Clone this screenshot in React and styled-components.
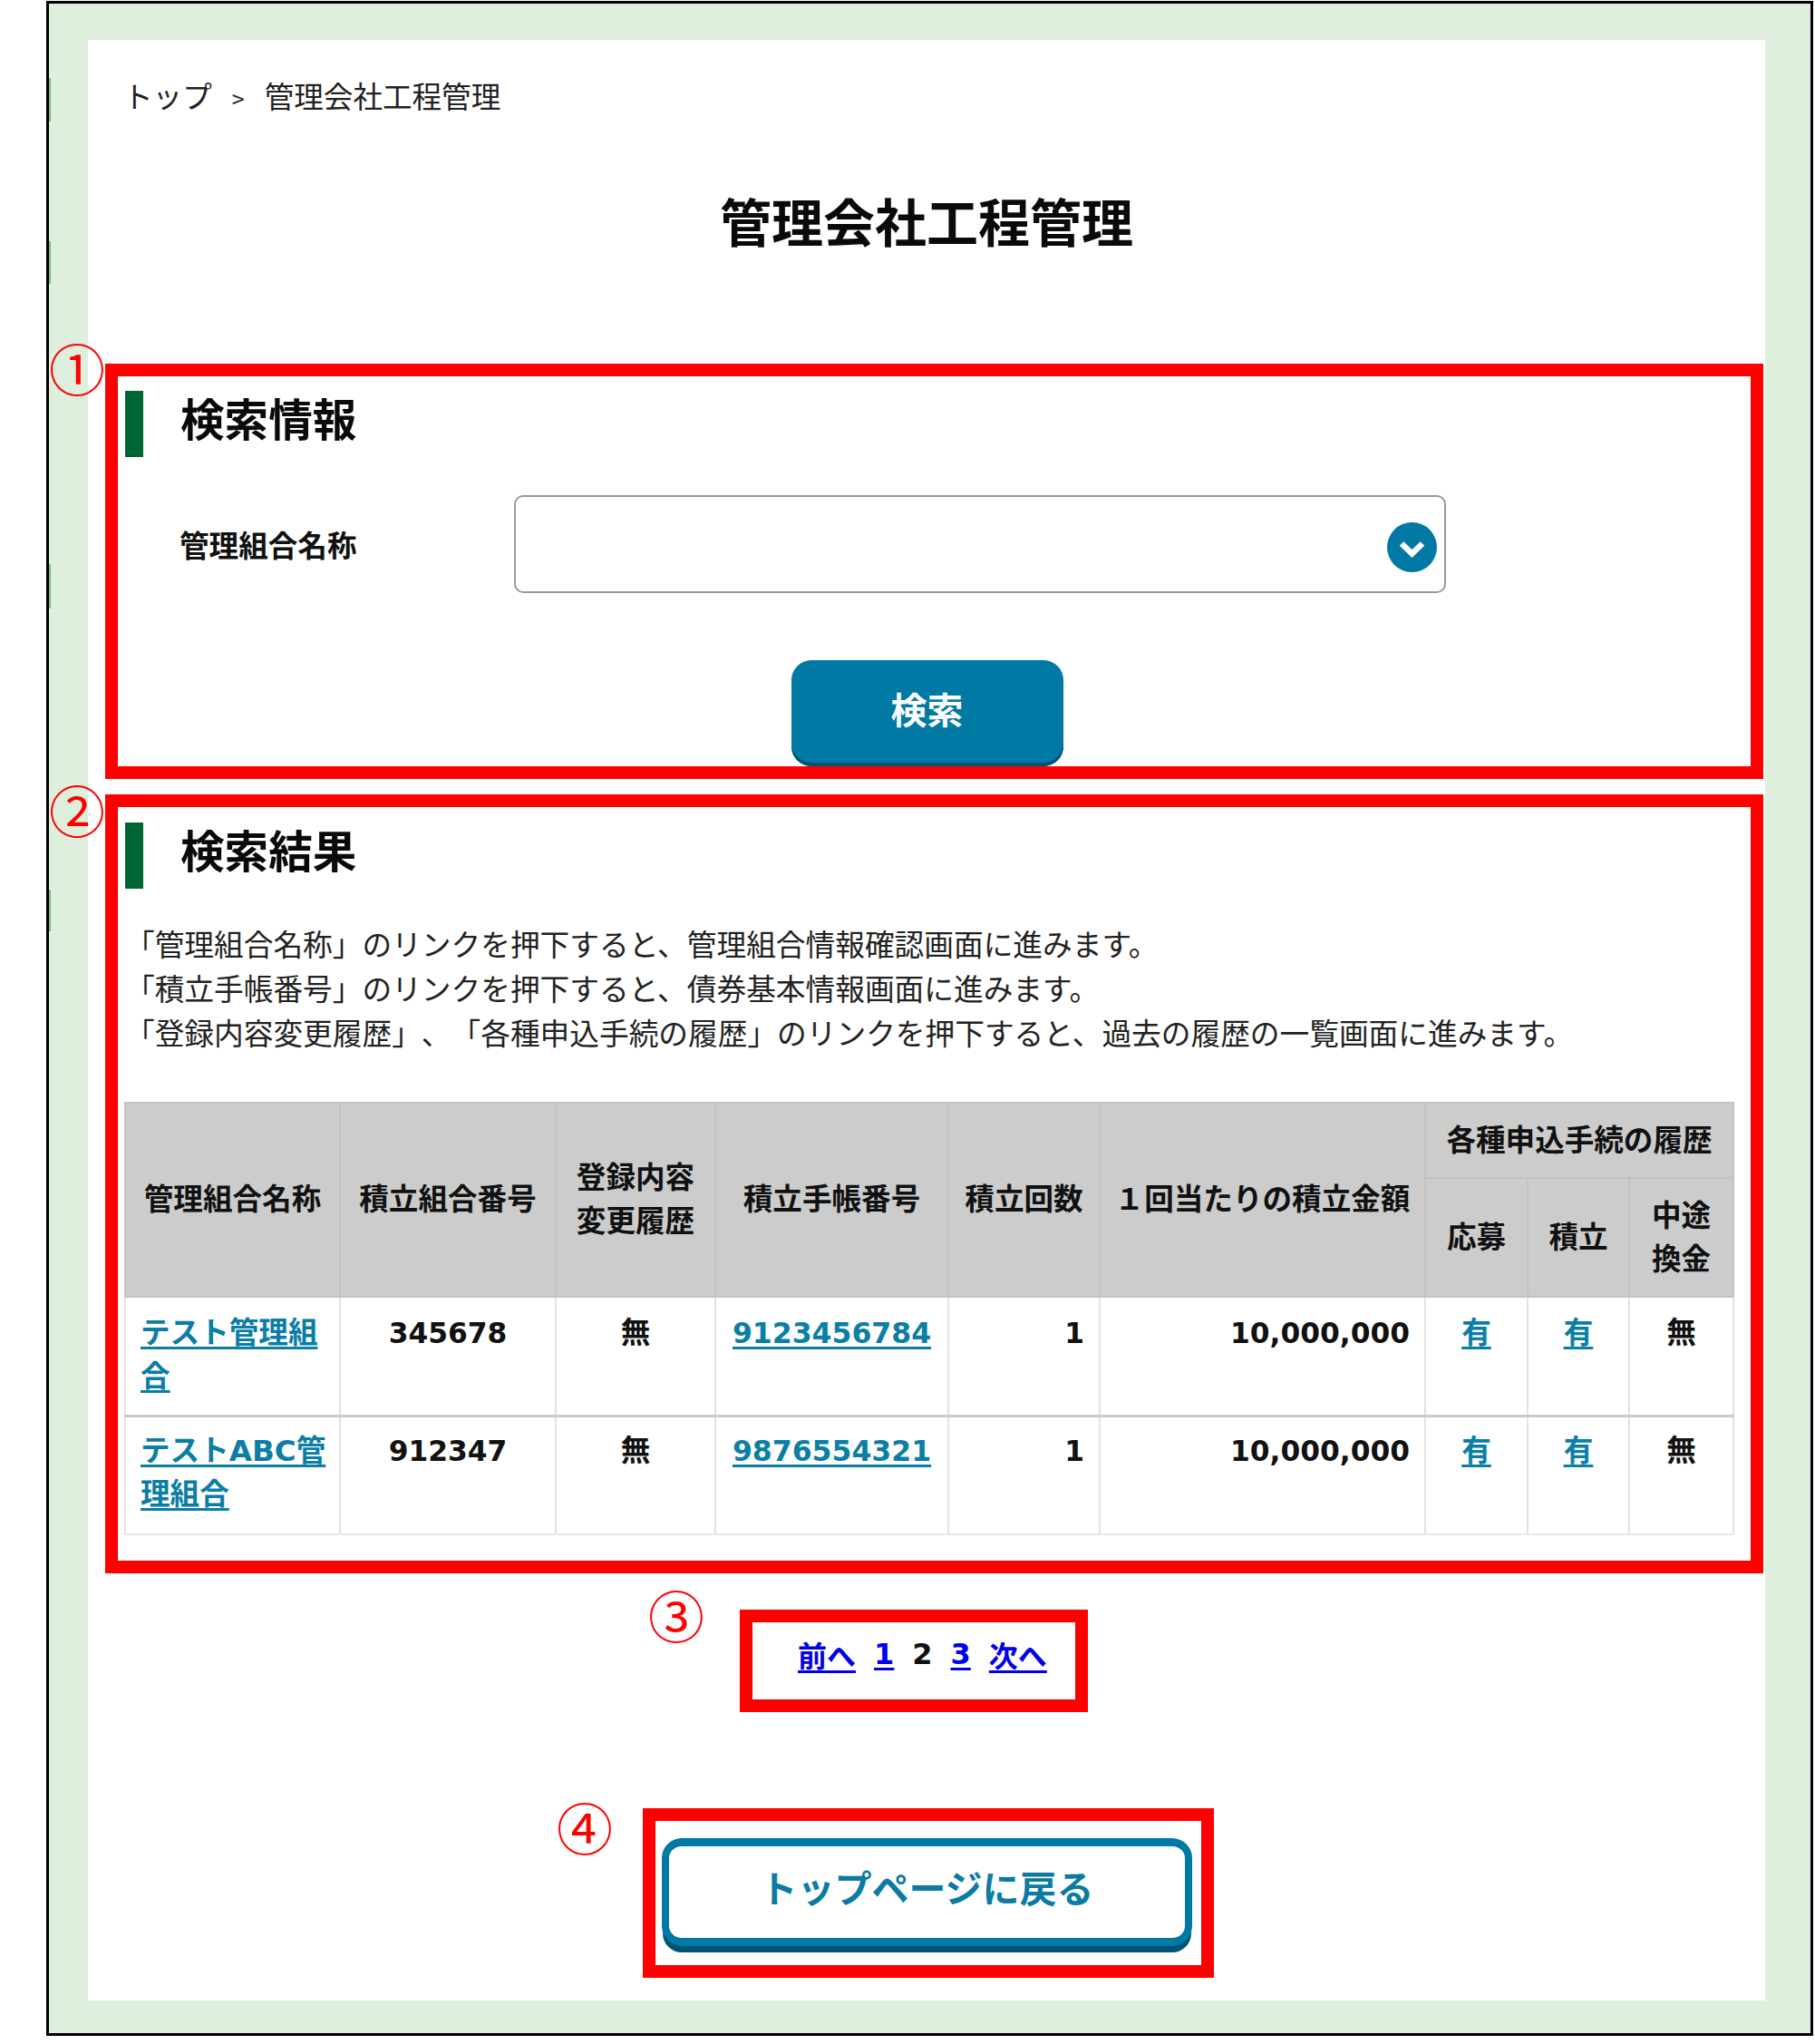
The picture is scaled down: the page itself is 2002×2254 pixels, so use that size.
import React from 'react';
import styled, { createGlobalStyle } from 'styled-components';

const GlobalStyle = createGlobalStyle`
	html, body {
		margin: 0;
		padding: 0;
		background: #fff;
	}
	body {
		font-family: "Noto Sans CJK JP", sans-serif;
		color: #1a1a1a;
	}
	* {
		box-sizing: border-box;
	}
`;

const Frame = styled.div`
	position: relative;
	width: 1949px;
	height: 2244px;
	margin: 1px 0 0 51px;
	padding: 40px 50px 0 43px;
	border: 3px solid #000;
	background: #dfefdd;
`;

const EdgeMark = styled.i`
	position: absolute;
	left: 0;
	top: ${(p) => p.$top}px;
	width: 2px;
	height: ${(p) => p.$height}px;
	background: #7fb98d;
`;

const Panel = styled.main`
	display: flex;
	flex-direction: column;
	height: 2162px;
	padding: 37px 2px 0 19px;
	background: #fff;
`;

const Crumbs = styled.nav`
	display: flex;
	align-items: center;
	height: 48px;
	padding-left: 20px;
	font-size: 32.6px;
	line-height: 48px;
	color: #222;
	span {
		margin: 6px 22px 0 22px;
		font-size: 25px;
	}
`;

const PageTitle = styled.h1`
	margin: 73px 0 119px;
	font-size: 57px;
	line-height: 80px;
	font-weight: 700;
	text-align: center;
	color: #0a0a0a;
	padding-right: 17px;
`;

const RedBox = styled.section`
	position: relative;
	display: flex;
	flex-direction: column;
	border: 14px solid #f00;
	padding: ${(p) => p.$padding};
	margin: ${(p) => p.$margin};
	width: ${(p) => p.$width};
	height: ${(p) => p.$height};
`;

const Circled = styled.span`
	position: absolute;
	left: ${(p) => p.$left}px;
	top: ${(p) => p.$top}px;
	width: 56px;
	font-size: 62px;
	line-height: 56px;
	text-align: center;
	color: #f00;
`;

const SectionTitle = styled.h2`
	margin: 0;
	height: 73px;
	padding-left: 41px;
	border-left: 20px solid #006633;
	font-size: 48.6px;
	line-height: 58px;
	font-weight: 700;
	color: #0a0a0a;
`;

const Field = styled.div`
	display: flex;
	align-items: center;
	margin-top: 42px;
	padding-left: 60px;
`;

const FieldLabel = styled.label`
	width: 369px;
	font-size: 32.6px;
	line-height: 48px;
	font-weight: 700;
	color: #111;
`;

const SelectBox = styled.div`
	display: flex;
	align-items: center;
	justify-content: flex-end;
	width: 1028px;
	height: 108px;
	padding: 6px 8px 0 0;
	border: 2px solid #9a9a9a;
	border-radius: 10px;
	background: #fff;
`;

const SearchButton = styled.button`
	align-self: center;
	width: 300px;
	height: 117px;
	margin: 74px 24px 0 0;
	padding: 0 0 12px;
	border: 0;
	border-radius: 22px;
	background: #0079a5;
	box-shadow: inset 0 -4px 0 #005473;
	font-family: inherit;
	font-size: 40px;
	font-weight: 700;
	color: #fff;
`;

const Guide = styled.p`
	margin: 35px 0 53px;
	font-size: 32.7px;
	line-height: 49px;
	color: #222;
	white-space: nowrap;
	text-spacing-trim: space-all;
`;

const Table = styled.table`
	width: 1774px;
	margin-left: -1px;
	table-layout: fixed;
	border-collapse: collapse;
	font-family: "DejaVu Sans", "Noto Sans CJK JP", sans-serif;
	font-size: 32.6px;
	line-height: 48px;
	font-weight: 700;
	color: #111;
`;

const Th = styled.th`
	height: ${(p) => p.$height || 'auto'};
	padding: 0 2px;
	background: #ccc;
	border: 2px solid #c3c3c3;
	font-weight: 700;
	text-align: center;
	vertical-align: middle;
	white-space: nowrap;
`;

const Td = styled.td`
	height: 131px;
	padding: 15px ${(p) => (p.$align === 'left' ? 8 : 16)}px 0 ${(p) => (p.$align === 'left' ? 16 : 16)}px;
	border-left: 2px solid #e2e2e2;
	border-right: 2px solid #e2e2e2;
	border-bottom: 3px solid #cacaca;
	text-align: ${(p) => p.$align || 'center'};
	vertical-align: top;
	tr:last-child & {
		padding-top: 13px;
		border-bottom: 2px solid #e8e8e8;
	}
`;

const Num = styled.span`
	font-size: 31.3px;
`;

const TableLink = styled.a`
	color: #0b7ea6;
	font-size: ${(p) => p.$size || 'inherit'};
	text-decoration: underline;
	text-decoration-thickness: 3px;
	text-underline-offset: 4px;
`;

const Pager = styled.div`
	display: flex;
	align-items: center;
	gap: 20px;
	height: 85px;
	padding: 0 0 15px 50px;
	font-family: "DejaVu Sans", "Noto Sans CJK JP", sans-serif;
	font-size: 32px;
	font-weight: 700;
	color: #111;
`;

const PagerLink = styled.a`
	color: #0000ee;
	text-decoration: underline;
	text-decoration-thickness: 3px;
	text-underline-offset: 4px;
`;

const BackButton = styled.button`
	width: 585px;
	height: 119px;
	padding: 0 0 14px;
	border: solid #0079a5;
	border-width: 9px 8px 9px;
	border-radius: 22px;
	background: #fff;
	box-shadow: 0 8px 0 -1px #005473;
	margin: 19px 0 0 7px;
	font-family: inherit;
	font-size: 41px;
	font-weight: 700;
	color: #0b7ba3;
`;

const ChevronCircle = () => (
	<svg width="55" height="55" viewBox="0 0 55 55">
		<circle cx="27.5" cy="27.5" r="27.5" fill="#0079a5" />
		<path d="M16 23.5 L27.5 34.5 L39 23.5" fill="none" stroke="#fff" strokeWidth="6.5" />
	</svg>
);

const rows = [
	{ name: 'テスト管理組合', union: '345678', book: '9123456784' },
	{ name: 'テストABC管理組合', union: '912347', book: '9876554321' }
];

const App = () => {
	return (
		<Frame>
			<GlobalStyle />
			<EdgeMark $top={82} $height={48} />
			<EdgeMark $top={262} $height={47} />
			<EdgeMark $top={618} $height={49} />
			<EdgeMark $top={977} $height={46} />
			<Panel>
				<Crumbs>
					トップ<span>&gt;</span>管理会社工程管理
				</Crumbs>
				<PageTitle>管理会社工程管理</PageTitle>

				<RedBox $padding="16px 0 0 8px" $margin="0" $height="458px">
					<Circled $left={-76} $top={-38}>①</Circled>
					<SectionTitle>検索情報</SectionTitle>
					<Field>
						<FieldLabel>管理組合名称</FieldLabel>
						<SelectBox>
							<ChevronCircle />
						</SelectBox>
					</Field>
					<SearchButton>検索</SearchButton>
				</RedBox>

				<RedBox $padding="17px 19px 28px 8px" $margin="17px 0 0" $height="859px">
					<Circled $left={-76} $top={-26}>②</Circled>
					<SectionTitle>検索結果</SectionTitle>
					<Guide>
						「管理組合名称」のリンクを押下すると、管理組合情報確認画面に進みます。
						<br />
						「積立手帳番号」のリンクを押下すると、債券基本情報画面に進みます。
						<br />
						「登録内容変更履歴」、「各種申込手続の履歴」のリンクを押下すると、過去の履歴の一覧画面に進みます。
					</Guide>
					<Table>
						<colgroup>
							<col width="237" />
							<col width="238" />
							<col width="176" />
							<col width="257" />
							<col width="167" />
							<col width="359" />
							<col width="113" />
							<col width="112" />
							<col width="115" />
						</colgroup>
						<thead>
							<tr>
								<Th rowSpan={2}>管理組合名称</Th>
								<Th rowSpan={2}>積立組合番号</Th>
								<Th rowSpan={2}>登録内容<br />変更履歴</Th>
								<Th rowSpan={2}>積立手帳番号</Th>
								<Th rowSpan={2}>積立回数</Th>
								<Th rowSpan={2}>１回当たりの積立金額</Th>
								<Th colSpan={3} $height="83px">各種申込手続の履歴</Th>
							</tr>
							<tr>
								<Th $height="131px">応募</Th>
								<Th>積立</Th>
								<Th>中途<br />換金</Th>
							</tr>
						</thead>
						<tbody>
							{rows.map((row) => (
								<tr key={row.book}>
									<Td $align="left"><TableLink>{row.name}</TableLink></Td>
									<Td><Num>{row.union}</Num></Td>
									<Td>無</Td>
									<Td><TableLink $size="31.5px">{row.book}</TableLink></Td>
									<Td $align="right"><Num>1</Num></Td>
									<Td $align="right"><Num>10,000,000</Num></Td>
									<Td><TableLink>有</TableLink></Td>
									<Td><TableLink>有</TableLink></Td>
									<Td>無</Td>
								</tr>
							))}
						</tbody>
					</Table>
				</RedBox>

				<RedBox $padding="0" $margin="40px 0 0 700px" $width="384px" $height="113px">
					<Circled $left={-115} $top={-37}>③</Circled>
					<Pager>
						<PagerLink>前へ</PagerLink>
						<PagerLink>1</PagerLink>
						<span>2</span>
						<PagerLink>3</PagerLink>
						<PagerLink>次へ</PagerLink>
					</Pager>
				</RedBox>

				<RedBox $padding="0" $margin="106px 0 0 593px" $width="630px" $height="187px">
					<Circled $left={-109} $top={-22}>④</Circled>
					<BackButton>トップページに戻る</BackButton>
				</RedBox>
			</Panel>
		</Frame>
	);
};

export default App;
